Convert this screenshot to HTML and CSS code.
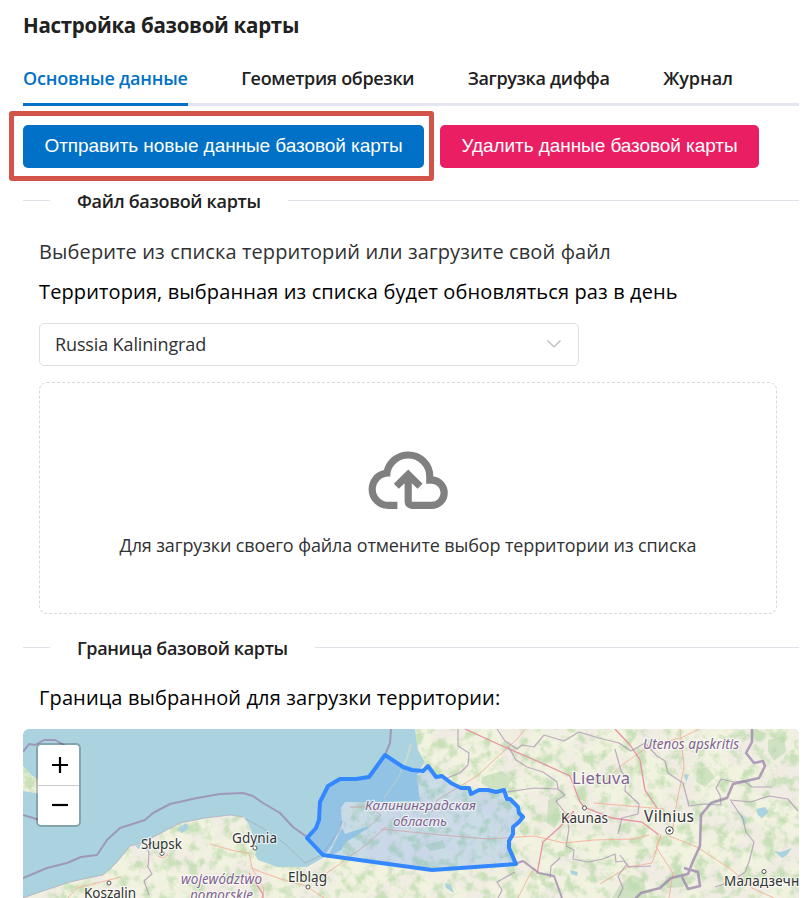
FILE: index.html
```html
<!DOCTYPE html>
<html lang="ru">
<head>
<meta charset="utf-8">
<title>Настройка базовой карты</title>
<link rel="stylesheet" href="styles.css">
</head>
<body>
<main class="page">
  <h1 class="title">Настройка базовой карты</h1>
  <nav class="tabs">
    <a class="tab tab-active">Основные данные</a>
    <a class="tab">Геометрия обрезки</a>
    <a class="tab">Загрузка диффа</a>
    <a class="tab tab-log">Журнал</a>
  </nav>
  <div class="actions">
    <button class="btn btn-primary">Отправить новые данные базовой карты</button>
    <button class="btn btn-danger">Удалить данные базовой карты</button>
    <div class="highlight"></div>
  </div>
  <div class="divider divider-file"><span>Файл базовой карты</span></div>
  <p class="text hint">Выберите из списка территорий или загрузите свой файл</p>
  <p class="text note">Территория, выбранная из списка будет обновляться раз в день</p>
  <div class="select"><span>Russia Kaliningrad</span>
    <svg width="16" height="10" viewBox="0 0 16 10"><path d="M1.500 1.500 8 8l6.500-6.500" fill="none" stroke="#b4b7bf" stroke-width="1.200"/></svg>
  </div>
  <div class="dropzone">
    <svg class="cloud" viewBox="0 0 24 24"><path fill="#808080" d="M6.500 20Q4.220 20 2.610 18.430 1 16.850 1 14.580 1 12.630 2.170 11.100 3.350 9.570 5.250 9.150 5.880 6.850 7.750 5.430 9.630 4 12 4 14.930 4 16.960 6.040 19 8.070 19 11 20.730 11.200 21.860 12.500 23 13.780 23 15.500 23 17.380 21.690 18.690 20.380 20 18.500 20H13Q12.180 20 11.590 19.410 11 18.830 11 18V12.850L9.400 14.400 8 13 12 9 16 13 14.600 14.400 13 12.850V18H18.500Q19.550 18 20.270 17.270 21 16.550 21 15.500 21 14.450 20.270 13.730 19.550 13 18.500 13H17V11Q17 8.930 15.540 7.460 14.080 6 12 6 9.930 6 8.460 7.460 7 8.930 7 11H6.500Q5.050 11 4.030 12.030 3 13.050 3 14.500 3 15.950 4.030 17 5.050 18 6.500 18H9V20"/></svg>
    <span>Для загрузки своего файла отмените выбор территории из списка</span>
  </div>
  <div class="divider divider-border"><span>Граница базовой карты</span></div>
  <p class="text border-note">Граница выбранной для загрузки территории:</p>
  <div class="map">
    <svg class="map-canvas" viewBox="23 729 776 169" width="776" height="169">
      <defs>
        <filter id="forest" x="0" y="0" width="1" height="1" color-interpolation-filters="sRGB">
          <feTurbulence type="fractalNoise" baseFrequency="0.085" numOctaves="5" seed="8"/>
          <feColorMatrix values="0 0 0 0 .76  0 0 0 0 .87  0 0 0 0 .70  4 0 0 0 -1.900"/>
        </filter>
        <filter id="fields" x="0" y="0" width="1" height="1" color-interpolation-filters="sRGB">
          <feTurbulence type="fractalNoise" baseFrequency="0.03" numOctaves="4" seed="21"/>
          <feColorMatrix values="0 0 0 0 .94  0 0 0 0 .92  0 0 0 0 .89  5 0 0 0 -2.200"/>
        </filter>
        <clipPath id="land"><path d="M23 898 40 892 70 882 88 878 103 875 110 869 117 862 130 846 142 843 163 832 180 823 205 818 230 815 243 817 248 823 254 838 257 847 255 855 258 860 277 867 307 867 323 858 332 845 342 823 341 808 345 802 383 802 420 801 417 775 425 762 418 750 415 729H799V898ZM23 766 31 775 39 780 47 798 36 793 23 791Z"/></clipPath>
      </defs>
      <rect x="23" y="729" width="776" height="169" fill="#aad3df"/>
      <g clip-path="url(#land)">
        <rect x="23" y="729" width="776" height="169" fill="#f1f2df"/>
        <rect x="23" y="729" width="776" height="169" filter="url(#fields)"/>
        <rect x="23" y="729" width="776" height="169" filter="url(#forest)" opacity=".85"/>
        <g class="wood"><path d="m482 777 20-6 10 8-5 10-18-1-8-5ZM548 800l9-3 3 18-5 13-8-5ZM620 885l12-10 12 4 3 19H612ZM768 740l16-4 2 16-12 9-6-10ZM697 770l10-3 8 10-10 10-9-5ZM425 845l18-5 2 8-15 3ZM665 877l14-8 8 8-4 10-16 1Z"/></g>
        <g class="lake"><path d="m756 809 9-2 4 5-7 6-4-3ZM774 851l6 1 7-2 5-2-5 7-5 3ZM740 813l5 5 1 7-4-6ZM570 870l8 2-1 4-6-2ZM445 883l6 2 3 8-8-5ZM684 774l5 1-3 7ZM177 829l9-6 3 5-7 5ZM135 846l6-2-2 5Z"/></g>
      </g>
      <path class="lagoon" d="m342 828 3 6 18-6 8-2-15 10-10 6-5 8-14 8Z"/>
      <path d="m411 744-4 14-9 20-14 20" fill="none" stroke="#cfdccb" stroke-width="1.500"/>
      <path class="coast" d="M23 898 40 892 70 882 88 878 103 875 110 869 117 862 130 846 142 843 163 832 180 823 205 818 230 815 243 817M246 819l18 10 20 14 21 20 17-8 17-24 3-10"/>
      <g class="road-minor">
        <path d="M68 898 77 888 105 881 121 877M158 856l6 2 4-4M210 844l25 7 14 2 3 15 9 4 20 7 25 7 18 12M252 868l12 21-2 9M320 878l46-33 20-18M381 829l60 6 47 4 46-3 30 7 30-3 40-1 15-4M350 807h20l11 8-12 12M432 812l5-12 40-24 41-38 7-9M602 784l20-19 27-19 32-8 18-9M594 803l70 6M672 834l5-33 7-34-4-38M661 834l-5 13 17 26-4 25M669 836l28 11 35 23 20 18 22 10M600 884l28-17 24-4 9-27M518 898l11-22 6-8"/>
      </g>
      <g class="road-major"><path d="m465 729 35 16 37 16 33 15 10 26 4 5 28 11 30 4 17 13M537 874l6-32 17-15 14-16M615 729l15 16 10 15 5 30 12 18M249 873l14 21v4"/></g>
      <g class="admin">
        <path d="m147 844 2 10-1 13 4 7-8 7 5 14M458 729v17l11 7-1 12-8 8-13 5M497 729l8 12 12 8 5-4 12 2 10-12 20 6 15-9 20 6 20 5 12 8 14-8 12 13 8 5 3 12 15 10 6 23 15-2 17 1-1-10-4-7 5-9 13 3 10-1 8 6h20M508 746l8 14 11 7 16 5 14 10 1 7M507 792l27-4 24 1 7 6-9 6 10 13 3 15-3 17 8 4-1 9 15 3 15-3 12-5 1 8 8-1 5 6 22-1M615 749l6 22 5 7-1 13 14 13-1 10-16 4-4 16M730 800l21 2 18-6 19 3 10 12M731 801l12 18 3 13 8 10-5 20-4 10-14 10-16 5M618 898l5-10-5-12 9-12-7-9M560 858l-9 8-1 12M498 898l4-8-5-8 18-10"/>
      </g>
      <g class="nation">
        <path d="M23 752 29 744 35 745 44 740 55 740 64 745 72 755 75 771M23 815 43 821M23 878 47 868 67 863 81 857 97 855 107 840 120 828 145 820 153 813 170 804 197 798 220 794 243 793 253 796 263 803 280 813 293 827 307 837M385 755l5-12 1-14M515 864l8-3 16 12 15 3 8 22"/>
      </g>
      <path class="nation nation-east" d="M752 729v13l-6 11 8 10 9-2 2 5-6 12-26 6-6 14-16 5-10 12-1 31-7 15-5 13-17 4-11 10-19 5-6 6v10M684 868l14 4 2 14-12 3-6-12"/>
      <path class="region" d="m307 838 9-10 3-8 1-18 8-16 12-7h16l13-2 16-22 18 12 9 3 11 1 5-5 8 11 6-1 9 7 10 5h8l2 6 8-4h9l8 2 8-2 3 9 3 0 8 8 1 6 4 4-4 5-6 5v7l-4 7v7l7 16-84 6-109-15Z"/>
      <g class="places">
        <g class="dots"><circle cx="109" cy="883" r="2"/><circle cx="162" cy="853.500" r="2"/><circle cx="255" cy="848" r="2"/><circle cx="308" cy="887" r="2"/><circle cx="584.500" cy="808" r="2"/><circle cx="764" cy="871.500" r="2"/><circle cx="669.500" cy="830.500" r="3.800"/><circle class="core" cx="669.500" cy="830.500" r="1"/></g>
        <g class="city">
          <text x="84" y="898" textLength="52">Koszalin</text>
          <text x="141" y="849" textLength="41">Słupsk</text>
          <text x="232" y="843" textLength="45">Gdynia</text>
          <text x="288" y="882" textLength="39">Elbląg</text>
          <text x="561" y="823" textLength="47">Kaunas</text>
          <text class="capital" x="644" y="822" textLength="50">Vilnius</text>
          <text x="724" y="886" textLength="83">Маладзечна</text>
        </g>
        <text class="country" x="572" y="784" textLength="58">Lietuva</text>
        <g class="province">
          <text x="181" y="884" textLength="81">województwo</text>
          <text x="190" y="900" textLength="63">pomorskie</text>
          <text x="643" y="749" textLength="96">Utenos apskritis</text>
          <text x="365" y="810" textLength="111">Калининградская</text>
          <text x="393" y="826" textLength="54">область</text>
        </g>
      </g>
    </svg>
    <div class="zoom">
      <div class="zoom-btn"><svg viewBox="0 0 18 18"><path d="M1 9h16M9 1v16"/></svg></div>
      <div class="zoom-btn"><svg viewBox="0 0 18 18"><path d="M1 9h16"/></svg></div>
    </div>
  </div>
</main>
</body>
</html>
```
FILE: styles.css
```css
* { box-sizing: border-box; }
body { margin: 0; background: #fff; color: #212529; font-family: "Open Sans", "Noto Sans", sans-serif; }
.page { height: 898px; padding: 11px 12px 0 23px; overflow: hidden; display: flex; flex-direction: column; white-space: nowrap; }
.title { margin: 0; height: 28px; font-size: 20.500px; line-height: 28px; font-weight: 700; color: #212121; letter-spacing: -.28px; }
.tabs { display: flex; gap: 53.500px; height: 67px; padding-top: 23px; border-bottom: 3px solid #e4e6f0; }
.tab { height: 44px; line-height: 32px; font-size: 18px; font-weight: 600; color: #212121; letter-spacing: -.33px; }
.tab-active { color: #0071c6; border-bottom: 3px solid #0071c6; letter-spacing: -.2px; }
.tab-log { letter-spacing: 0; }
.actions { position: relative; display: flex; gap: 16px; margin-top: 19px; height: 43px; }
.btn { border: 0; border-radius: 5px; color: #fff; font: 19px/41px "Liberation Sans", Arial, sans-serif; letter-spacing: -.065px; padding: 0 0 2px; height: 43px; }
.btn-primary { width: 401px; background: #0071c6; }
.btn-danger { width: 319px; background: #ea1e63; }
.highlight { position: absolute; left: -14px; top: -14px; width: 425px; height: 70px; border: 5px solid #d25347; border-radius: 3px; }
.divider { display: flex; align-items: center; gap: 27px; height: 26px; font-size: 18px; font-weight: 600; color: #212121; line-height: 26px; letter-spacing: -.31px; }
.divider::before { content: ""; width: 27px; height: 1px; margin-top: -1px; background: #dfe1e9; }
.divider::after { content: ""; flex: 1; height: 1px; margin-top: -1px; background: #dfe1e9; }
.divider-file { margin-top: 20px; }
.text { margin: 0 0 0 16px; font-size: 20px; line-height: 40px; height: 40px; color: #303133; letter-spacing: .12px; }
.hint { margin-top: 18px; }
.note, .border-note { color: #000; }
.select { margin: 11px 0 0 16px; width: 540px; height: 43px; border: 1.500px solid #dcdfe6; border-radius: 5px; padding: 0 16px 2px 15px; display: flex; align-items: center; justify-content: space-between; font-size: 18px; color: #303133; letter-spacing: -.13px; }
.dropzone { margin: 16px 0 0 16px; width: 738px; height: 232px; border: 1px dashed #d9d9d9; border-radius: 8px; display: flex; flex-direction: column; align-items: center; padding-top: 54px; font-size: 18px; line-height: 26px; color: #303133; letter-spacing: -.12px; }
.cloud { width: 86.400px; height: 86.400px; margin-bottom: 9px; flex: none; }
.divider-border { margin-top: 21px; letter-spacing: -.36px; }
.border-note { margin-top: 17px; }
.map { position: relative; margin-top: 11px; height: 169px; border-radius: 6px 6px 0 0; overflow: hidden; }
.map-canvas { display: block; }
.wood { fill: #b9d9ad; opacity: .6; }
.lake, .lagoon { fill: #aad3df; }
.coast { fill: none; stroke: #a69bb4; stroke-width: .8; opacity: .75; }
.road-minor { fill: none; stroke: #f7ad96; stroke-width: 1; opacity: .85; }
.road-major { fill: none; stroke: #e892a2; stroke-width: 1.300; }
.admin { fill: none; stroke: #a994b4; stroke-width: 1.200; opacity: .75; stroke-linejoin: round; }
.nation { fill: none; stroke: #9a83ab; stroke-width: 2; opacity: .75; stroke-linejoin: round; }
.nation-east { stroke-width: 2.600; }
.region { fill: #3388ff; fill-opacity: .2; stroke: #3388ff; stroke-width: 4; stroke-linejoin: round; }
.dots { fill: #fff; stroke: #555; stroke-width: 1; }
.dots .core { fill: #444; }
.places text { font-family: "Noto Sans", sans-serif; paint-order: stroke; stroke: #fff; stroke-opacity: .65; stroke-width: 2.500px; stroke-linejoin: round; }
.city text { font-size: 13.500px; fill: #333; }
.city .capital { font-size: 15.500px; }
.places .country { font-size: 16.500px; fill: #80628f; }
.province text { font-size: 13.500px; font-style: italic; fill: #80628f; }
.zoom { position: absolute; left: 13px; top: 14px; width: 45px; height: 84px; border: 2px solid rgba(0, 0, 0, .22); border-radius: 5px; background: #fff; background-clip: padding-box; }
.zoom-btn { height: 40px; display: flex; align-items: center; justify-content: center; padding-left: 2px; }
.zoom-btn + .zoom-btn { height: 39px; border-top: 1px solid #ccc; }
.zoom-btn svg { width: 18px; height: 18px; fill: none; stroke: #000; stroke-width: 2.200; }
```
